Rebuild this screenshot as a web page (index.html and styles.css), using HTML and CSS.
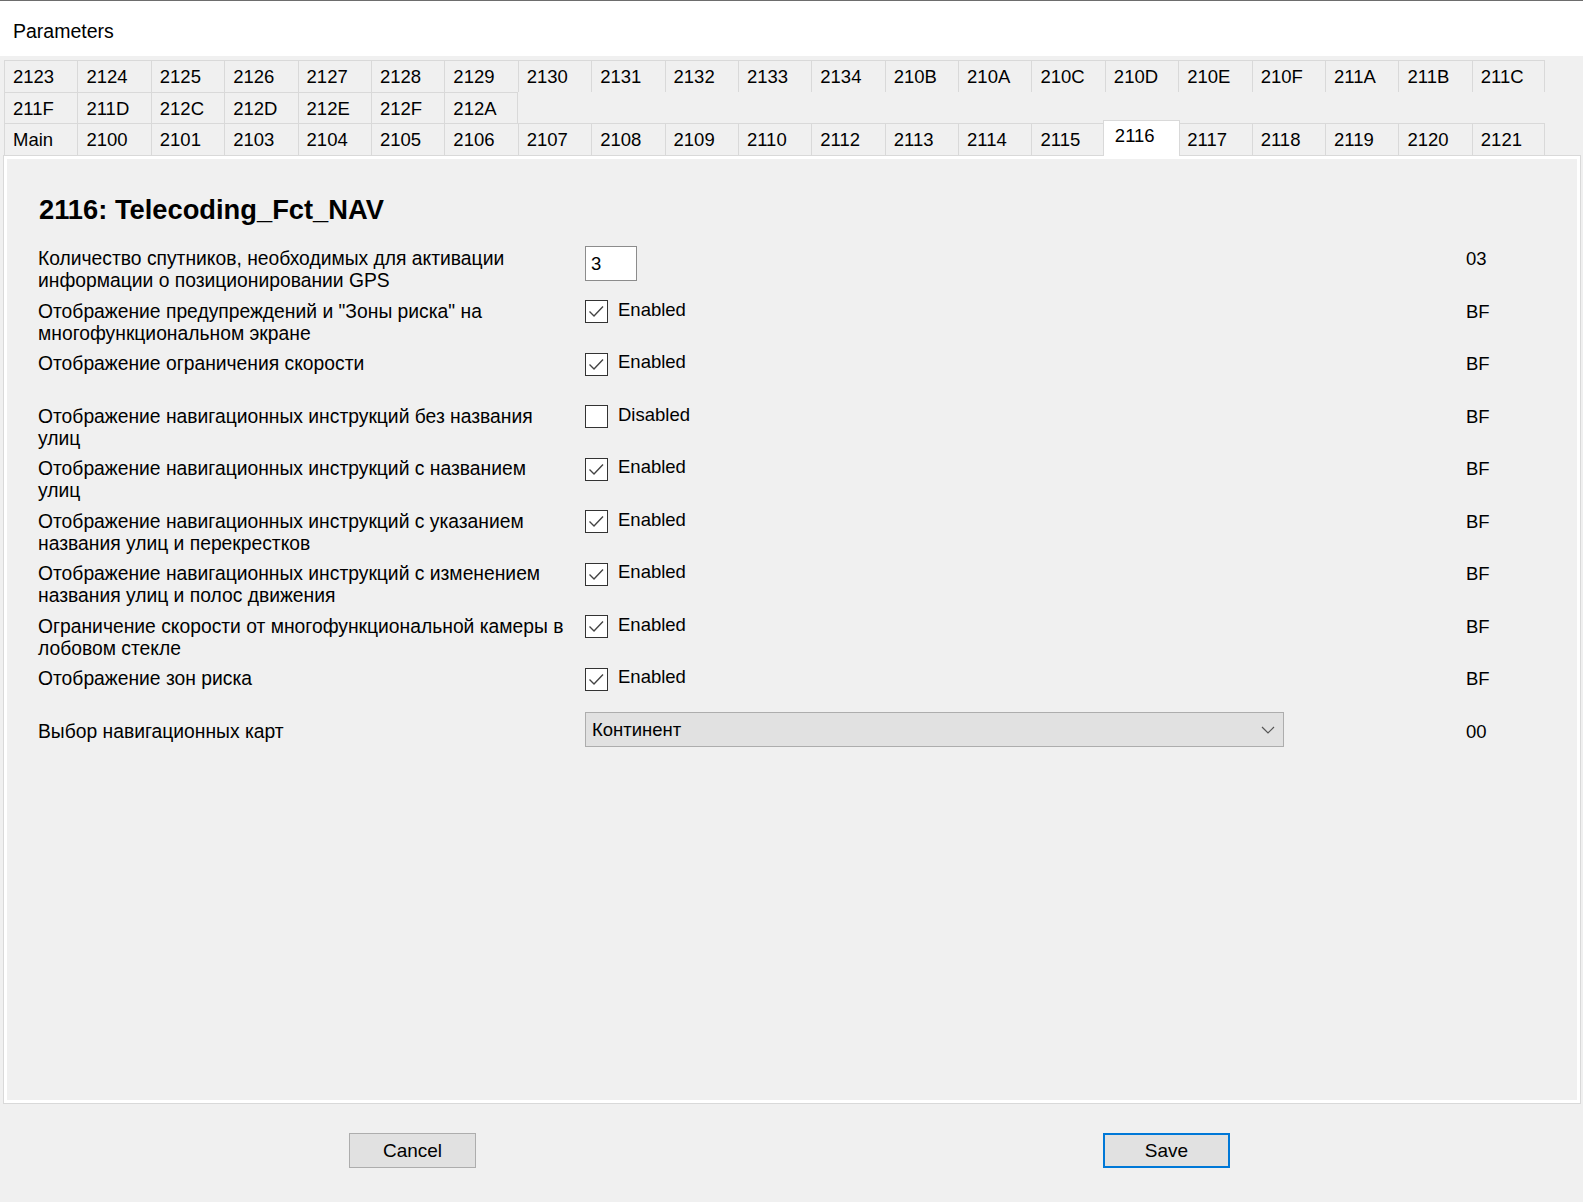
FILE: index.html
```html
<!DOCTYPE html>
<html lang="ru">

<head>
  <meta charset="UTF-8" />
  <title>Parameters</title>
  <link rel="stylesheet" href="styles.css">
</head>

<body>
  <div class="titlebar">Parameters</div>

  <div class="tabstrip">
    <div class="tabrow">
      <div class="tab">2123</div><div class="tab">2124</div><div class="tab">2125</div><div class="tab">2126</div>
      <div class="tab">2127</div><div class="tab">2128</div><div class="tab">2129</div><div class="tab">2130</div>
      <div class="tab">2131</div><div class="tab">2132</div><div class="tab">2133</div><div class="tab">2134</div>
      <div class="tab">210B</div><div class="tab">210A</div><div class="tab">210C</div><div class="tab">210D</div>
      <div class="tab">210E</div><div class="tab">210F</div><div class="tab">211A</div><div class="tab">211B</div>
      <div class="tab">211C</div>
    </div>
    <div class="tabrow">
      <div class="tab">211F</div><div class="tab">211D</div><div class="tab">212C</div><div class="tab">212D</div>
      <div class="tab">212E</div><div class="tab">212F</div><div class="tab">212A</div>
    </div>
    <div class="tabrow">
      <div class="tab">Main</div><div class="tab">2100</div><div class="tab">2101</div><div class="tab">2103</div>
      <div class="tab">2104</div><div class="tab">2105</div><div class="tab">2106</div><div class="tab">2107</div>
      <div class="tab">2108</div><div class="tab">2109</div><div class="tab">2110</div><div class="tab">2112</div>
      <div class="tab">2113</div><div class="tab">2114</div><div class="tab">2115</div><div class="tab active">2116</div>
      <div class="tab">2117</div><div class="tab">2118</div><div class="tab">2119</div><div class="tab">2120</div>
      <div class="tab">2121</div>
    </div>
  </div>

  <div class="panel">
    <div class="page">
      <h1>2116: Telecoding_Fct_NAV</h1>

      <div class="row">
        <div class="label">Количество спутников, необходимых для активации<br>информации о позиционировании GPS</div>
        <div class="control"><input class="textbox" type="text" value="3"></div>
        <div class="value">03</div>
      </div>

      <div class="row">
        <div class="label">Отображение предупреждений и "Зоны риска" на<br>многофункциональном экране</div>
        <div class="control"><span class="check on"></span>Enabled</div>
        <div class="value">BF</div>
      </div>

      <div class="row">
        <div class="label">Отображение ограничения скорости</div>
        <div class="control"><span class="check on"></span>Enabled</div>
        <div class="value">BF</div>
      </div>

      <div class="row">
        <div class="label">Отображение навигационных инструкций без названия<br>улиц</div>
        <div class="control"><span class="check"></span>Disabled</div>
        <div class="value">BF</div>
      </div>

      <div class="row">
        <div class="label">Отображение навигационных инструкций с названием<br>улиц</div>
        <div class="control"><span class="check on"></span>Enabled</div>
        <div class="value">BF</div>
      </div>

      <div class="row">
        <div class="label">Отображение навигационных инструкций с указанием<br>названия улиц и перекрестков</div>
        <div class="control"><span class="check on"></span>Enabled</div>
        <div class="value">BF</div>
      </div>

      <div class="row">
        <div class="label">Отображение навигационных инструкций с изменением<br>названия улиц и полос движения</div>
        <div class="control"><span class="check on"></span>Enabled</div>
        <div class="value">BF</div>
      </div>

      <div class="row">
        <div class="label">Ограничение скорости от многофункциональной камеры в<br>лобовом стекле</div>
        <div class="control"><span class="check on"></span>Enabled</div>
        <div class="value">BF</div>
      </div>

      <div class="row">
        <div class="label">Отображение зон риска</div>
        <div class="control"><span class="check on"></span>Enabled</div>
        <div class="value">BF</div>
      </div>

      <div class="row">
        <div class="label">Выбор навигационных карт</div>
        <div class="control">
          <div class="combo">
            <span>Континент</span>
            <svg width="14" height="8" viewBox="0 0 14 8"><path d="M1 1 L7 7 L13 1" fill="none" stroke="#555" stroke-width="1.2"/></svg>
          </div>
        </div>
        <div class="value">00</div>
      </div>
    </div>
  </div>

  <div class="footer">
    <button class="btn">Cancel</button>
    <button class="btn default">Save</button>
  </div>
</body>

</html>
```

FILE: styles.css
```css
* {
  box-sizing: border-box;
  margin: 0;
  padding: 0;
}

body {
  background-color: #f0f0f0;
  color: #000;
  font-family: 'Liberation Sans', Arial, sans-serif;
  font-size: 18.5px;
  width: 1583px;
  height: 1202px;
  overflow: hidden;
}

.titlebar {
  background-color: #fff;
  border-top: 1px solid #6d6d6d;
  height: 56px;
  padding: 19px 0 0 13px;
  font-size: 19.5px;
}

/* multi-line tab header */
.tabstrip {
  padding: 4px 0 0 4px;
}

.tabrow {
  display: flex;
  height: 31.5px;
}

.tab {
  flex: 0 0 73.4px;
  border-top: 1px solid #d9d9d9;
  border-left: 1px solid #d9d9d9;
  background-color: #f0f0f0;
  padding: 5px 0 0 8px;
  white-space: nowrap;
}

.tab:last-child {
  border-right: 1px solid #d9d9d9;
}

.tab.active {
  flex-basis: 77.4px;
  margin: -3px -2px -1px -2px;
  padding: 4px 0 0 11px;
  background-color: #fff;
  border-right: 1px solid #d9d9d9;
  position: relative;
  z-index: 1;
}

.panel {
  margin: 0 2px 0 3px;
  height: 949.5px;
  border: 1px solid #d9d9d9;
  background-color: #fff;
  padding: 3px;
}

.page {
  height: 100%;
  background-color: #f0f0f0;
  padding: 36.5px 0 0 31px;
}

h1 {
  font-size: 27.3px;
  font-weight: bold;
  line-height: 30px;
  height: 30px;
  margin: 0 0 21px 1px;
}

.row {
  display: grid;
  grid-template-columns: 547px 881px 1fr;
  height: 52.5px;
}

.label {
  font-size: 19.3px;
  line-height: 22.2px;
  padding-top: 2px;
  white-space: nowrap;
}

.control {
  display: flex;
  align-items: flex-start;
  line-height: 22px;
  gap: 10px;
}

.value {
  line-height: 22.2px;
  padding-top: 2px;
}

.textbox {
  width: 52px;
  height: 35px;
  border: 1px solid #8c8c8c;
  background-color: #fff;
  font: inherit;
  padding: 0 5px;
  outline: none;
}

.check {
  width: 23px;
  height: 23px;
  margin-top: 1.5px;
  border: 1px solid #333;
  background-color: #fff;
  flex: 0 0 auto;
}

.check.on {
  background: #fff url("data:image/svg+xml;utf8,<svg xmlns='http://www.w3.org/2000/svg' viewBox='0 0 21 21'><path d='M3.5 10.5 L8 15 L17 5.5' fill='none' stroke='%23444' stroke-width='1.4'/></svg>") no-repeat center / 21px 21px;
}

.combo {
  width: 699px;
  height: 35px;
  margin-top: -6.5px;
  background-color: #e1e1e1;
  border: 1px solid #adadad;
  display: flex;
  align-items: center;
  justify-content: space-between;
  padding: 0 8px 0 6px;
}

.footer {
  display: flex;
  gap: 627px;
  padding: 29px 0 0 349px;
}

.btn {
  width: 127px;
  height: 35px;
  background-color: #e1e1e1;
  border: 1px solid #adadad;
  font-family: inherit;
  font-size: 19px;
  color: #000;
}

.btn.default {
  border: 2px solid #0078d7;
}
```
